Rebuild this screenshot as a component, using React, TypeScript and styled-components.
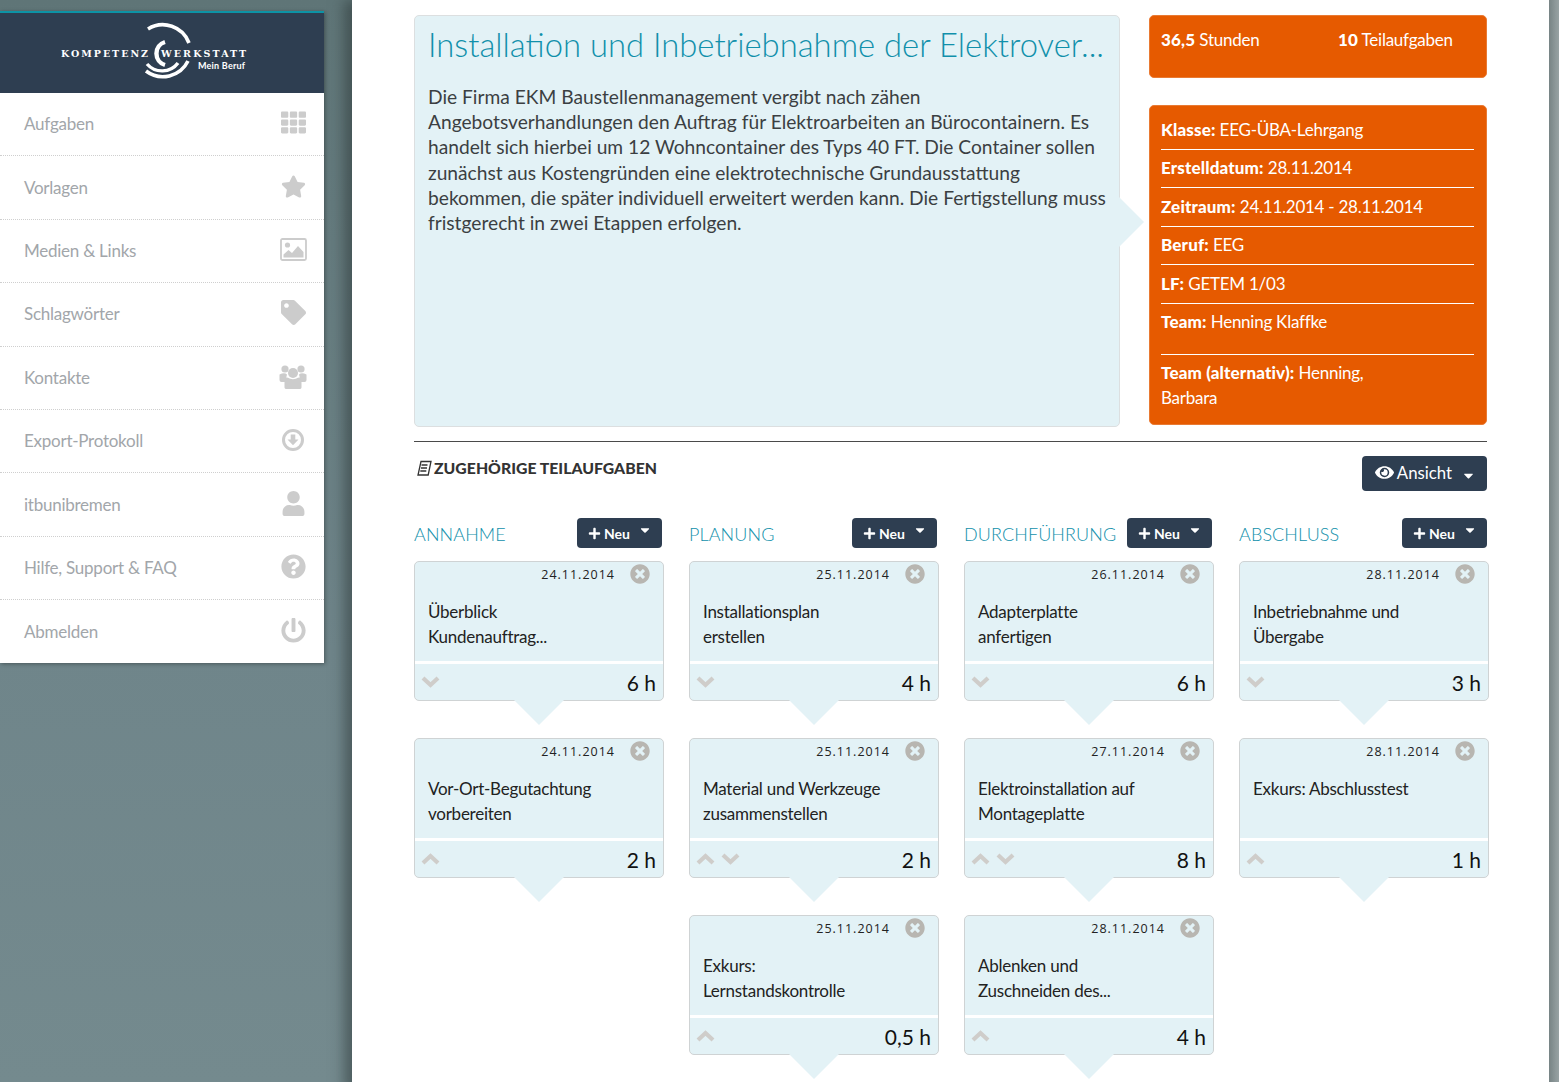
import React from "react";
import styled, { createGlobalStyle } from "styled-components";
import { FaTh, FaStar, FaTag, FaUser, FaQuestionCircle, FaPowerOff, FaTimesCircle, FaPlus, FaEye, FaCaretDown } from "react-icons/fa";

const Global = createGlobalStyle`
  html, body { margin: 0; padding: 0; height: 1082px; overflow: hidden; }
  body { font-family: "Lato", "Noto Sans", sans-serif; background: #6c8286; }
  * { box-sizing: border-box; }
`;
const Page = styled.div`
  display: grid; grid-template-columns: 352px 1197px 10px; height: 1082px; width: 1559px; overflow: hidden;
  background: linear-gradient(180deg, #5f7577 0%, #6f858a 60%, #748a8e 100%);
`;
const Side = styled.aside`padding-top: 11px; padding-right: 28px;`;
const SidePanel = styled.div`background: #fff; box-shadow: 1px 1px 4px rgba(0,0,0,.35);`;
const Brand = styled.div`height: 82px; background: #2e3e51; border-top: 2px solid #0d93a5; display: flex;`;
const MenuRow = styled.div`
  height: 63.4px; display: flex; align-items: center; justify-content: space-between; padding: 0 17px 1px 24px;
  border-bottom: 1px dotted #cfcfcf; color: #a2a6aa; font-size: 17px; letter-spacing: -.25px;
  &:last-child { border-bottom: 0; height: 62.8px; }
`;
const MenuIcon = styled.span`display: flex; width: 28px; justify-content: center; color: #cccccc; font-size: 25px; margin-top: -2px;`;
const Main = styled.main`background: #fff; padding: 15px 0 0 62px; box-shadow: -8px 0 12px rgba(40,50,50,.5); position: relative;`;
const RightEdge = styled.div`background: linear-gradient(90deg, #7c8889, #98a3a4);`;
const Top = styled.section`display: grid; grid-template-columns: 706px 338px; column-gap: 29px; width: 1073px;`;
const Desc = styled.div`
  height: 412px; background: #e3f2f6; border: 1px solid #dcdfe0; border-radius: 5px; padding: 8px 13px; position: relative; color: #3b3f42;
  &::after { content: ""; position: absolute; right: -25px; top: 181px; border-style: solid; border-width: 25px 0 25px 25px; border-color: transparent transparent transparent #e3f2f6; }
`;
const Title = styled.h1`margin: 0 0 18px; font-weight: 300; font-size: 32.8px; line-height: 42px; color: #1190ab; white-space: nowrap;`;
const Body = styled.p`margin: 0; font-size: 19.2px; line-height: 25.2px;`;
const Info = styled.div`display: flex; flex-direction: column; gap: 27px;`;
const Orange = styled.div`background: #e65a00; border: 1px solid #e97a33; border-radius: 5px; color: #fff; padding: 0 12px 0 11px; font-size: 17px; letter-spacing: -.25px; b { font-weight: 900; letter-spacing: .15px; }`;
const Stats = styled(Orange)`height: 63px; display: flex; padding-top: 11px; line-height: 25px;`;
const Stat = styled.span<{ $w: number }>`width: ${(p) => p.$w}px;`;
const Facts = styled(Orange)`height: 320px; padding-top: 5.4px;`;
const Fact = styled.div<{ $tall?: boolean }>`
  line-height: 25px; height: ${(p) => (p.$tall ? 51 : 38.5)}px; padding-top: 5.5px; border-bottom: 1px solid #fff;
  &:last-child { border-bottom: 0; height: auto; padding-right: 90px; }
`;
const Rule = styled.hr`width: 1073px; margin: 14px 0 0; border: 0; border-top: 1px solid #4a4a4a;`;
const SectionHead = styled.div`width: 1073px; display: flex; justify-content: space-between; align-items: flex-start; padding-top: 14px;`;
const SectionTitle = styled.h2`margin: 0; display: flex; align-items: center; gap: 1px; font-size: 15.8px; line-height: 24px; font-weight: 900; color: #333; text-transform: uppercase; padding-left: 2px;`;
const Btn = styled.button`background: #2e3e51; color: #fff; border: 0; border-radius: 4px; font-family: inherit; display: flex; align-items: center; padding: 0; flex: none;`;
const ViewBtn = styled(Btn)`width: 125px; height: 35px; font-size: 16.8px; justify-content: center; gap: 3px; padding: 0 0 2px 2px;`;
const NewBtn = styled(Btn)`width: 85px; height: 30px; font-size: 14px; font-weight: 700; justify-content: center; gap: 3px; padding-left: 1px;`;
const Board = styled.div`display: grid; grid-template-columns: repeat(4, 250px); column-gap: 25px; margin-top: 27px; width: 1075px;`;
const Column = styled.div`display: flex; flex-direction: column;`;
const ColHead = styled.div`display: flex; justify-content: space-between; align-items: flex-start; height: 43px; padding-right: 2px;`;
const ColTitle = styled.h3`margin: 6px 0 0; font-size: 18px; line-height: 20px; font-weight: 300; color: #1190ab; letter-spacing: .1px; text-transform: uppercase;`;
const Card = styled.article`
  width: 250px; height: 140px; margin-bottom: 37px; background: #e3f2f6; border: 1px solid #cfd3d4; border-radius: 5px; position: relative;
  display: flex; flex-direction: column;
  &::after { content: ""; position: absolute; left: 99px; bottom: -25px; border-style: solid; border-width: 25px 25px 0 25px; border-color: #e3f2f6 transparent transparent transparent; }
`;
const CardTop = styled.div`height: 102px; padding: 1px 13px; border-bottom: 3px solid #fff; color: #222;`;
const DateRow = styled.div`display: flex; justify-content: flex-end; align-items: center; height: 22px; gap: 15px; font-family: "Open Sans", sans-serif; font-size: 12.5px; letter-spacing: 1px; color: #222; svg { color: #b8b6b1; font-size: 20px; }`;
const CardTitle = styled.div`margin-top: 14px; font-size: 17px; letter-spacing: -.25px; line-height: 25px; white-space: pre-line;`;
const CardFoot = styled.div`flex: 1; display: flex; justify-content: space-between; align-items: flex-start; padding: 3px 7px 0 6px;`;
const Arrows = styled.div`display: flex; gap: 6px; color: #cfcdca; padding-top: 9px;`;
const Hours = styled.span`font-size: 21px; line-height: 32px; color: #111;`;

const Chevron = ({ up }: { up?: boolean }) => (
  <svg width="19" height="12" viewBox="0 0 19 12" fill="none" stroke="currentColor" strokeWidth="4.2">
    <path d={up ? "M2 10 L9.5 3 L17 10" : "M2 2 L9.5 9 L17 2"} />
  </svg>
);
const ExportIcon = () => (
  <svg width="24" height="24" viewBox="0 0 24 24"><circle cx="12" cy="12" r="9.5" fill="none" stroke="currentColor" strokeWidth="3" /><path d="M9.7 6.5h4.6v5h3.2L12 17.2 6.5 11.5h3.2z" fill="currentColor" /></svg>
);
const ImageIcon = () => (
  <svg width="27" height="23" viewBox="0 0 27 23">
    <rect x="1" y="1" width="25" height="21" rx="1.5" fill="none" stroke="currentColor" strokeWidth="1.8" />
    <circle cx="7.5" cy="7" r="2.6" fill="currentColor" />
    <path d="M3.5 19.5v-3l5-4.500 3.500 3 6-7 5.500 6v5.500z" fill="currentColor" />
  </svg>
);
const GroupIcon = () => (
  <svg width="28" height="28" viewBox="0 0 28 28" fill="currentColor">
    <circle cx="6" cy="7" r="3.6" /><circle cx="22" cy="7" r="3.6" /><circle cx="14" cy="11" r="5" />
    <path d="M0.500 12.500q5-2.500 7.500 0 -1.500 2.500 .500 5l-1.500 2.500h-4.500q-2 0-2-2z" />
    <path d="M27.500 12.500q-5-2.500-7.500 0 1.500 2.500-.500 5l1.500 2.500h4.500q2 0 2-2z" />
    <path d="M8.500 15.500q5.500 3.500 11 0 3 1.500 3 5v5q0 1.500-2 1.500h-13q-2 0-2-1.500v-5q0-3.500 3-5z" />
  </svg>
);
const DocIcon = () => (
  <svg width="17" height="17" viewBox="0 0 17 17" fill="none" stroke="#333" strokeWidth="1.3"><path d="M5 1.500h10L12.200 15H2z" /><path d="M5.500 5h6M5 8h6M4.300 11h6" /></svg>
);
const Logo = () => (
  <svg width="324" height="80" viewBox="0 0 324 80" fill="none">
    <g stroke="#fff">
      <path d="M148 16 A28 28 0 0 1 189 30" strokeWidth="3.6" />
      <path d="M146 58 A28 28 0 0 0 188 48" strokeWidth="3.6" />
      <path d="M147 51 A20 20 0 0 0 178 50" strokeWidth="3.4" />
      <path d="M165 29 A12 12 0 0 0 165 52" strokeWidth="4.4" />
    </g>
    <text x="61" y="43.500" fill="#fff" fontFamily="DejaVu Serif, serif" fontWeight="700" fontSize="9.500" textLength="87" lengthAdjust="spacing">KOMPETENZ</text>
    <text x="161" y="43.500" fill="#fff" fontFamily="DejaVu Serif, serif" fontWeight="700" fontSize="9.500" textLength="85" lengthAdjust="spacing">WERKSTATT</text>
    <text x="198" y="56" fill="#fff" fontFamily="Lato, sans-serif" fontWeight="700" fontSize="9" textLength="47">Mein Beruf</text>
  </svg>
);

const menu: [string, React.ReactNode][] = [
  ["Aufgaben", <FaTh />], ["Vorlagen", <FaStar />], ["Medien & Links", <ImageIcon />], ["Schlagwörter", <FaTag />],
  ["Kontakte", <GroupIcon />], ["Export-Protokoll", <ExportIcon />], ["itbunibremen", <FaUser />], ["Hilfe, Support & FAQ", <FaQuestionCircle />], ["Abmelden", <FaPowerOff />],
];
type T = { d: string; t: string; h: string; up?: boolean; down?: boolean };
const cols: { name: string; cards: T[] }[] = [
  { name: "Annahme", cards: [
    { d: "24.11.2014", t: "Überblick\nKundenauftrag...", h: "6 h", down: true },
    { d: "24.11.2014", t: "Vor-Ort-Begutachtung\nvorbereiten", h: "2 h", up: true } ] },
  { name: "Planung", cards: [
    { d: "25.11.2014", t: "Installationsplan\nerstellen", h: "4 h", down: true },
    { d: "25.11.2014", t: "Material und Werkzeuge\nzusammenstellen", h: "2 h", up: true, down: true },
    { d: "25.11.2014", t: "Exkurs:\nLernstandskontrolle", h: "0,5 h", up: true } ] },
  { name: "Durchführung", cards: [
    { d: "26.11.2014", t: "Adapterplatte\nanfertigen", h: "6 h", down: true },
    { d: "27.11.2014", t: "Elektroinstallation auf\nMontageplatte", h: "8 h", up: true, down: true },
    { d: "28.11.2014", t: "Ablenken und\nZuschneiden des...", h: "4 h", up: true } ] },
  { name: "Abschluss", cards: [
    { d: "28.11.2014", t: "Inbetriebnahme und\nÜbergabe", h: "3 h", down: true },
    { d: "28.11.2014", t: "Exkurs: Abschlusstest", h: "1 h", up: true } ] },
];

export default function App() {
  return (
    <Page>
      <Global />
      <Side>
        <SidePanel>
          <Brand><Logo /></Brand>
          {menu.map(([label, icon]) => (
            <MenuRow key={label}>{label}<MenuIcon>{icon}</MenuIcon></MenuRow>
          ))}
        </SidePanel>
      </Side>
      <Main>
        <Top>
          <Desc>
            <Title>Installation und Inbetriebnahme der Elektrover...</Title>
            <Body>Die Firma EKM Baustellenmanagement vergibt nach zähen Angebotsverhandlungen den Auftrag für Elektroarbeiten an Bürocontainern. Es handelt sich hierbei um 12 Wohncontainer des Typs 40 FT. Die Container sollen zunächst aus Kostengründen eine elektrotechnische Grundausstattung bekommen, die später individuell erweitert werden kann. Die Fertigstellung muss fristgerecht in zwei Etappen erfolgen.</Body>
          </Desc>
          <Info>
            <Stats>
              <Stat $w={177}><b>36,5</b> Stunden</Stat>
              <Stat $w={130}><b>10</b> Teilaufgaben</Stat>
            </Stats>
            <Facts>
              <Fact><b>Klasse:</b> EEG-ÜBA-Lehrgang</Fact>
              <Fact><b>Erstelldatum:</b> 28.11.2014</Fact>
              <Fact><b>Zeitraum:</b> 24.11.2014 - 28.11.2014</Fact>
              <Fact><b>Beruf:</b> EEG</Fact>
              <Fact><b>LF:</b> GETEM 1/03</Fact>
              <Fact $tall><b>Team:</b> Henning Klaffke</Fact>
              <Fact><b>Team (alternativ):</b> Henning, Barbara</Fact>
            </Facts>
          </Info>
        </Top>
        <Rule />
        <SectionHead>
          <SectionTitle><DocIcon />Zugehörige Teilaufgaben</SectionTitle>
          <ViewBtn><FaEye size={19} />Ansicht<FaCaretDown size={15} style={{ marginLeft: 6, marginTop: 5 }} /></ViewBtn>
        </SectionHead>
        <Board>
          {cols.map((c) => (
            <Column key={c.name}>
              <ColHead>
                <ColTitle>{c.name}</ColTitle>
                <NewBtn><FaPlus size={13} />Neu<FaCaretDown size={14} style={{ marginLeft: 5, marginTop: -6 }} /></NewBtn>
              </ColHead>
              {c.cards.map((k) => (
                <Card key={k.t}>
                  <CardTop>
                    <DateRow>{k.d}<FaTimesCircle /></DateRow>
                    <CardTitle>{k.t}</CardTitle>
                  </CardTop>
                  <CardFoot>
                    <Arrows>{k.up && <Chevron up />}{k.down && <Chevron />}</Arrows>
                    <Hours>{k.h}</Hours>
                  </CardFoot>
                </Card>
              ))}
            </Column>
          ))}
        </Board>
      </Main>
      <RightEdge />
    </Page>
  );
}
